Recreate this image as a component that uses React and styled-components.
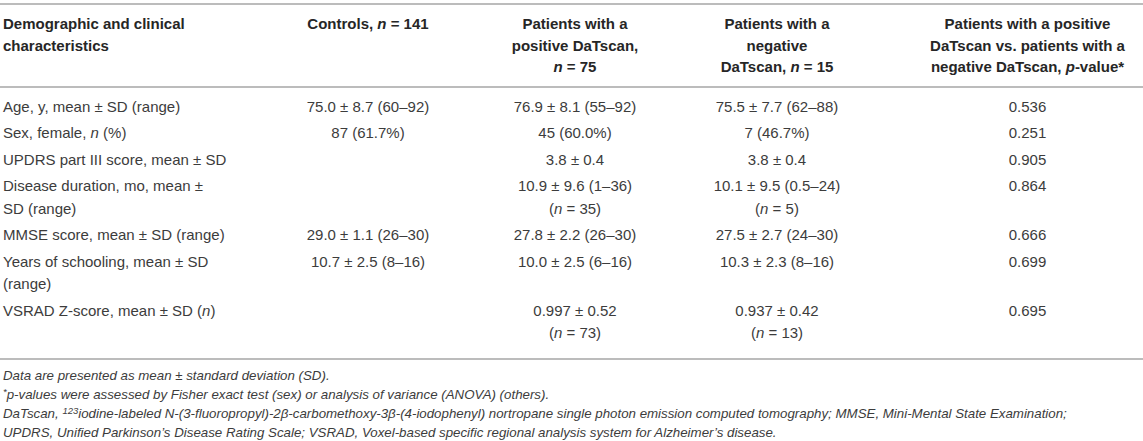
import React from "react";
import styled, { createGlobalStyle } from "styled-components";

const GlobalStyle = createGlobalStyle`
  body {
    margin: 0;
    background: #ffffff;
    font-family: "Liberation Sans", Arial, Helvetica, sans-serif;
  }
`;

const COLUMNS = "228px 280px 134px 270px 231px";

const rows = [
  {
    label: ["Age, y, mean ± SD (range)"],
    values: [["75.0 ± 8.7 (60–92)"], ["76.9 ± 8.1 (55–92)"], ["75.5 ± 7.7 (62–88)"], ["0.536"]],
  },
  {
    label: [
      <>
        Sex, female, <i>n</i> (%)
      </>,
    ],
    values: [["87 (61.7%)"], ["45 (60.0%)"], ["7 (46.7%)"], ["0.251"]],
  },
  {
    label: ["UPDRS part III score, mean ± SD"],
    values: [[""], ["3.8 ± 0.4"], ["3.8 ± 0.4"], ["0.905"]],
  },
  {
    label: ["Disease duration, mo, mean ±", "SD (range)"],
    values: [
      [""],
      [
        "10.9 ± 9.6 (1–36)",
        <>
          (<i>n</i> = 35)
        </>,
      ],
      [
        "10.1 ± 9.5 (0.5–24)",
        <>
          (<i>n</i> = 5)
        </>,
      ],
      ["0.864"],
    ],
  },
  {
    label: ["MMSE score, mean ± SD (range)"],
    values: [["29.0 ± 1.1 (26–30)"], ["27.8 ± 2.2 (26–30)"], ["27.5 ± 2.7 (24–30)"], ["0.666"]],
  },
  {
    label: ["Years of schooling, mean ± SD", "(range)"],
    values: [["10.7 ± 2.5 (8–16)"], ["10.0 ± 2.5 (6–16)"], ["10.3 ± 2.3 (8–16)"], ["0.699"]],
  },
  {
    label: [
      <>
        VSRAD Z-score, mean ± SD (<i>n</i>)
      </>,
    ],
    values: [
      [""],
      [
        "0.997 ± 0.52",
        <>
          (<i>n</i> = 73)
        </>,
      ],
      [
        "0.937 ± 0.42",
        <>
          (<i>n</i> = 13)
        </>,
      ],
      ["0.695"],
    ],
  },
];

function Lines({ items }) {
  return items.map((line, i) => <Line key={i}>{line}</Line>);
}

function App() {
  return (
    <>
      <GlobalStyle />
      <Page>
        <Table>
          <HeadRow>
            <HeadCell>
              <Line>Demographic and clinical</Line>
              <Line>characteristics</Line>
            </HeadCell>
            <HeadCell $center>
              <Line>
                Controls, <i>n</i> = 141
              </Line>
            </HeadCell>
            <HeadCell $center>
              <Line>Patients with a</Line>
              <Line>positive DaTscan,</Line>
              <Line>
                <i>n</i> = 75
              </Line>
            </HeadCell>
            <HeadCell $center>
              <Line>Patients with a</Line>
              <Line>negative</Line>
              <Line>
                DaTscan, <i>n</i> = 15
              </Line>
            </HeadCell>
            <HeadCell $center>
              <Line>Patients with a positive</Line>
              <Line>DaTscan vs. patients with a</Line>
              <Line>
                negative DaTscan, <i>p</i>-value*
              </Line>
            </HeadCell>
          </HeadRow>
          <Body>
            {rows.map((row, r) => (
              <BodyRow key={r}>
                <Cell>
                  <Lines items={row.label} />
                </Cell>
                {row.values.map((v, c) => (
                  <Cell key={c} $center>
                    <Lines items={v} />
                  </Cell>
                ))}
              </BodyRow>
            ))}
          </Body>
        </Table>
        <Notes>
          <Note>Data are presented as mean ± standard deviation (SD).</Note>
          <Note>
            <Sup>*</Sup>p-values were assessed by Fisher exact test (sex) or analysis of variance (ANOVA) (others).
          </Note>
          <Note>
            DaTscan, <Sup>123</Sup>iodine-labeled N-(3-fluoropropyl)-2β-carbomethoxy-3β-(4-iodophenyl) nortropane
            single photon emission computed tomography; MMSE, Mini-Mental State Examination;
          </Note>
          <Note>
            UPDRS, Unified Parkinson’s Disease Rating Scale; VSRAD, Voxel-based specific regional analysis system
            for Alzheimer’s disease.
          </Note>
        </Notes>
      </Page>
    </>
  );
}

export default App;

const Page = styled.div`
  width: 1143px;
  padding-top: 3px;
`;

const Table = styled.div`
  border-top: 2px solid #bcbcbc;
  border-bottom: 2px solid #bcbcbc;
`;

const HeadRow = styled.div`
  display: grid;
  grid-template-columns: ${COLUMNS};
  padding: 8px 0 8px;
  border-bottom: 2px solid #bcbcbc;
`;

const HeadCell = styled.div`
  font-size: 15px;
  font-weight: 700;
  line-height: 21.5px;
  color: #262626;
  text-align: ${(p) => (p.$center ? "center" : "left")};
  padding-left: ${(p) => (p.$center ? "0" : "3px")};
`;

const Body = styled.div`
  padding: 6px 0 11px;
`;

const BodyRow = styled.div`
  display: grid;
  grid-template-columns: ${COLUMNS};
  padding: 2px 0;
`;

const Cell = styled.div`
  font-size: 15px;
  line-height: 22.5px;
  color: #3c3c3c;
  text-align: ${(p) => (p.$center ? "center" : "left")};
  padding-left: ${(p) => (p.$center ? "0" : "3px")};
`;

const Line = styled.div`
  white-space: nowrap;
`;

const Notes = styled.div`
  padding: 6px 0 0 3px;
`;

const Note = styled.div`
  font-size: 13.3px;
  line-height: 19px;
  font-style: italic;
  color: #3c3c3c;
  white-space: nowrap;
`;

const Sup = styled.sup`
  font-size: 9.5px;
  line-height: 0;
  vertical-align: 4px;
`;
